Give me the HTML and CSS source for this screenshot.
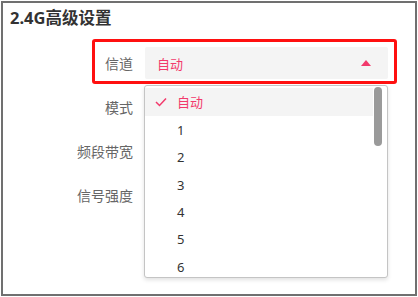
FILE: index.html
```html
<!DOCTYPE html>
<html lang="zh-CN">
<head>
  <meta charset="UTF-8" />
  <meta name="viewport" content="width=device-width, initial-scale=1.0" />
  <title>2.4G高级设置</title>
  <link rel="stylesheet" href="styles.css">
</head>
<body>
  <div class="frame">
    <h2 class="title">2.4G高级设置</h2>

    <div class="form">
      <div class="row active">
        <label class="label">信道</label>
        <div class="select">
          <span class="value">自动</span>
          <span class="arrow"></span>
        </div>
        <ul class="dropdown">
          <li class="item selected">
            <svg class="check" width="12" height="10" viewBox="0 0 12 10">
              <polyline points="1,5 4.5,8.5 11,1.5" fill="none" stroke="#f23a6c" stroke-width="1.5" />
            </svg>
            自动
          </li>
          <li class="item">1</li>
          <li class="item">2</li>
          <li class="item">3</li>
          <li class="item">4</li>
          <li class="item">5</li>
          <li class="item">6</li>
          <li class="thumb"></li>
        </ul>
      </div>
      <div class="row">
        <label class="label">模式</label>
      </div>
      <div class="row">
        <label class="label">频段带宽</label>
      </div>
      <div class="row">
        <label class="label">信号强度</label>
      </div>
    </div>
  </div>
</body>
</html>
```

FILE: styles.css
```css
body {
  margin: 0;
  font-family: "Noto Sans", "Noto Sans CJK SC", sans-serif;
  background: #fff;
}
.frame {
  margin: 1px;
  width: 416px;
  height: 295px;
  box-sizing: border-box;
  border: 2px solid #707070;
  overflow: hidden;
}
.title {
  margin: 0;
  padding: 4px 0 0 7px;
  font-size: 16.5px;
  line-height: 22px;
  font-weight: bold;
  color: #333;
}
.form {
  margin-top: 18px;
}
.row {
  position: relative;
  display: flex;
  align-items: center;
  height: 32px;
  margin-bottom: 12px;
}
.label {
  width: 130px;
  margin-right: 12px;
  text-align: right;
  font-size: 14px;
  color: #666;
}
.row.active::before {
  content: "";
  position: absolute;
  left: 89px;
  top: -8px;
  width: 305px;
  height: 45px;
  box-sizing: border-box;
  border: 3px solid #ff1010;
  border-radius: 3px;
}
.select {
  width: 243px;
  height: 32px;
  box-sizing: border-box;
  display: flex;
  align-items: center;
  justify-content: space-between;
  padding: 0 17px 0 12px;
  background: #f4f4f4;
  border-radius: 2px;
}
.value {
  font-size: 13px;
  color: #f23a6c;
}
.arrow {
  width: 0;
  height: 0;
  border-left: 5px solid transparent;
  border-right: 5px solid transparent;
  border-bottom: 6px solid #f23a6c;
}
.dropdown {
  position: absolute;
  left: 141px;
  top: 38px;
  width: 244px;
  height: 193px;
  box-sizing: border-box;
  margin: 0;
  padding: 2px 14px 0 0;
  list-style: none;
  background: #fff;
  border: 1px solid #c4c4c4;
  border-radius: 3px;
  box-shadow: 0 2px 4px rgba(0, 0, 0, 0.12);
  z-index: 2;
}
.item {
  position: relative;
  height: 27.33px;
  line-height: 28px;
  padding-left: 32px;
  font-size: 13px;
  color: #333;
}
.item.selected {
  height: 28px;
  line-height: 28px;
  background: #f4f4f4;
  color: #f23a6c;
}
.check {
  position: absolute;
  left: 10px;
  top: 9px;
}
.thumb {
  position: absolute;
  right: 5px;
  top: 1px;
  width: 8px;
  height: 59px;
  border-radius: 4px;
  background: #9a9a9a;
}
```
